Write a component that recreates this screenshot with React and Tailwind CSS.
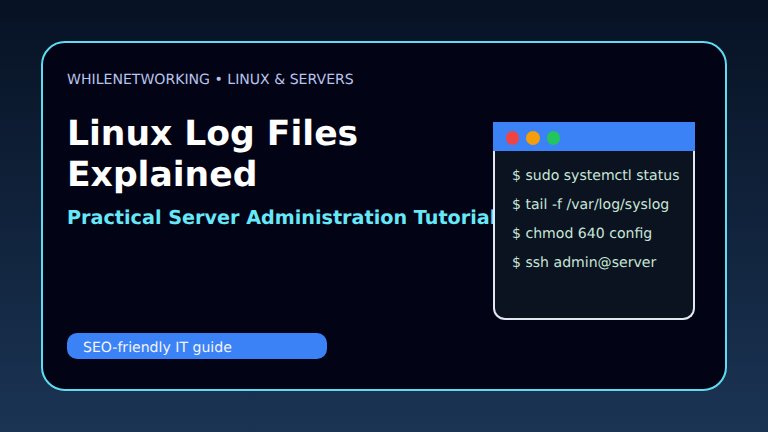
import React from 'react';

const commands = [
  '$ sudo systemctl status',
  '$ tail -f /var/log/syslog',
  '$ chmod 640 config',
  '$ ssh admin@server',
];

const App = () => {
  return (
    <div className="w-[768px] h-[432px] overflow-hidden p-[41px] bg-gradient-to-b from-[#071224] to-[#1b3454] font-['DejaVu_Sans',sans-serif] [text-rendering:geometricPrecision]">
      <div className="flex h-[350px] rounded-[24px] border-2 border-[#5fdcf0] bg-[#020314]">
        <div className="w-[450px] shrink-0 pl-[24px] flex flex-col">
          <p className="mt-[29px] text-[14.08px] leading-[17px] text-[#b9c4ec] whitespace-nowrap">WHILENETWORKING • LINUX &amp; SERVERS</p>
          <h1 className="mt-[25px] text-[34.56px] leading-[41px] font-bold text-white">
            Linux Log Files
            <br />
            Explained
          </h1>
          <p className="mt-[10px] text-[19.2px] leading-[23px] font-bold text-[#67e8f9] whitespace-nowrap">Practical Server Administration Tutorial</p>
          <div className="mt-auto mb-[30px] w-[260px] h-[26px] rounded-[10px] bg-[#3b82f6] pl-[16px] text-[14.08px] leading-[31px] text-[#f1f5f9]">SEO-friendly IT guide</div>
        </div>
        <div className="relative z-10 mt-[79px] w-[202px] h-[198px] flex flex-col">
          <div className="h-[29px] shrink-0 bg-[#3b82f6] flex items-center gap-[7.2px] pl-[12.6px] pt-[3px]">
            <span className="w-[13.44px] h-[13.44px] rounded-full bg-[#ef4444]"></span>
            <span className="w-[13.44px] h-[13.44px] rounded-full bg-[#f59e0b]"></span>
            <span className="w-[13.44px] h-[13.44px] rounded-full bg-[#22c55e]"></span>
          </div>
          <div className="flex-1 rounded-b-[12px] border-2 border-t-0 border-[#e2e8f0] bg-[#0b1220] pl-[17px] pt-[11px] text-[14.08px] leading-[29px] text-[#c8e6d8] whitespace-nowrap">
            {commands.map((cmd) => (
              <div key={cmd}>{cmd}</div>
            ))}
          </div>
        </div>
      </div>
    </div>
  );
};

export default App;
